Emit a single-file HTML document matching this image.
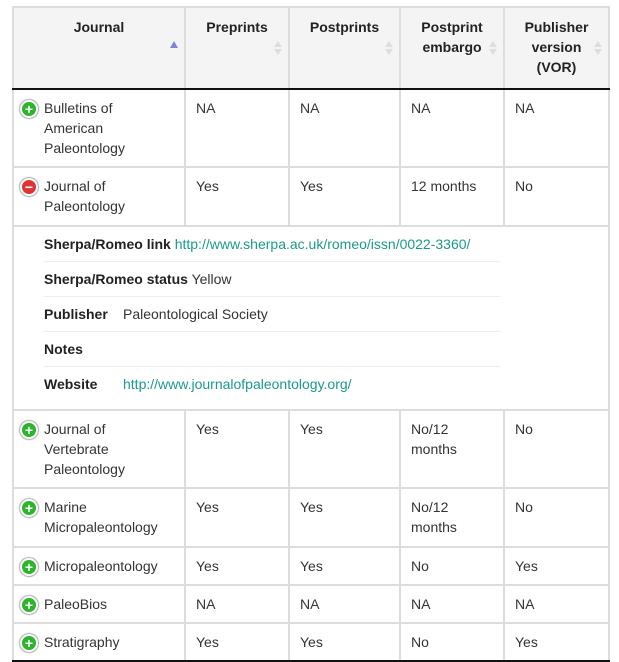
<!DOCTYPE html>
<html><head><meta charset="utf-8"><style>
body{margin:0;background:#fff;font-family:"Liberation Sans",sans-serif;font-size:14px;color:#333;}
table{position:absolute;left:12px;top:6px;border-collapse:collapse;table-layout:fixed;width:598px;}
td,th{border:2px solid #ddd;vertical-align:top;line-height:20px;padding:8px 10px 0 10px;text-align:left;}
th{background:#f4f4f4;font-weight:bold;text-align:center;height:71px;position:relative;padding-top:9px;color:#222;border-bottom:2px solid #111;}
th .s{position:absolute;right:6px;top:33px;width:8px;height:14px;}
th .s:before{content:"";position:absolute;left:0;top:0;border-left:4px solid transparent;border-right:4px solid transparent;border-bottom:6px solid #ddd;}
th .s:after{content:"";position:absolute;left:0;top:8px;border-left:4px solid transparent;border-right:4px solid transparent;border-top:6px solid #ddd;}
th .a{position:absolute;right:6px;top:33px;border-left:4px solid transparent;border-right:4px solid transparent;border-bottom:7px solid #7f84d8;}
td.j{padding-left:30px;position:relative;}
.i{position:absolute;left:6px;top:10px;width:14px;height:14px;border-radius:50%;border:2px solid #fff;box-shadow:0 0 1px 1px #aaa;background:#2ab52a;color:#fff;font-weight:bold;font-size:14px;line-height:14px;text-align:center;}
.i.r{background:#d33;}
.det td{padding:0 0 0 30px;}
.dl{width:456px;margin-top:0;}
.dl div{height:34px;line-height:34px;border-bottom:1px solid #eee;}
.dl div:last-child{border-bottom:none;}
.dl b{color:#222;}
.dl .w{display:inline-block;width:79px;}
a{color:#1a9a8a;text-decoration:none;}
tr:last-child td{border-bottom:2px solid #111;}
</style></head><body>
<table>
<colgroup><col style="width:172px"><col style="width:104px"><col style="width:111px"><col style="width:104px"><col style="width:105px"></colgroup>
<tr><th>Journal<span class="a"></span></th><th>Preprints<span class="s"></span></th><th>Postprints<span class="s"></span></th><th>Postprint<br>embargo<span class="s" style="top:33px"></span></th><th>Publisher<br>version<br>(VOR)<span class="s"></span></th></tr>
<tr style="height:78px"><td class="j"><span class="i">+</span>Bulletins of<br>American<br>Paleontology</td><td>NA</td><td>NA</td><td>NA</td><td>NA</td></tr>
<tr style="height:59px"><td class="j"><span class="i r">−</span>Journal of<br>Paleontology</td><td>Yes</td><td>Yes</td><td>12 months</td><td>No</td></tr>
<tr class="det" style="height:184px"><td colspan="5"><div class="dl">
<div style="margin-top:0"><b>Sherpa/Romeo link</b> <a>http://www.sherpa.ac.uk/romeo/issn/0022-3360/</a></div>
<div><b>Sherpa/Romeo status</b> Yellow</div>
<div><b class="w">Publisher</b>Paleontological Society</div>
<div><b class="w">Notes</b></div>
<div><b class="w">Website</b><a>http://www.journalofpaleontology.org/</a></div>
</div></td></tr>
<tr style="height:78px"><td class="j"><span class="i">+</span>Journal of<br>Vertebrate<br>Paleontology</td><td>Yes</td><td>Yes</td><td>No/12<br>months</td><td>No</td></tr>
<tr style="height:59px"><td class="j"><span class="i">+</span>Marine<br>Micropaleontology</td><td>Yes</td><td>Yes</td><td>No/12<br>months</td><td>No</td></tr>
<tr style="height:38px"><td class="j"><span class="i">+</span>Micropaleontology</td><td>Yes</td><td>Yes</td><td>No</td><td>Yes</td></tr>
<tr style="height:38px"><td class="j"><span class="i">+</span>PaleoBios</td><td>NA</td><td>NA</td><td>NA</td><td>NA</td></tr>
<tr style="height:38px"><td class="j"><span class="i">+</span>Stratigraphy</td><td>Yes</td><td>Yes</td><td>No</td><td>Yes</td></tr>
</table>
</body></html>
